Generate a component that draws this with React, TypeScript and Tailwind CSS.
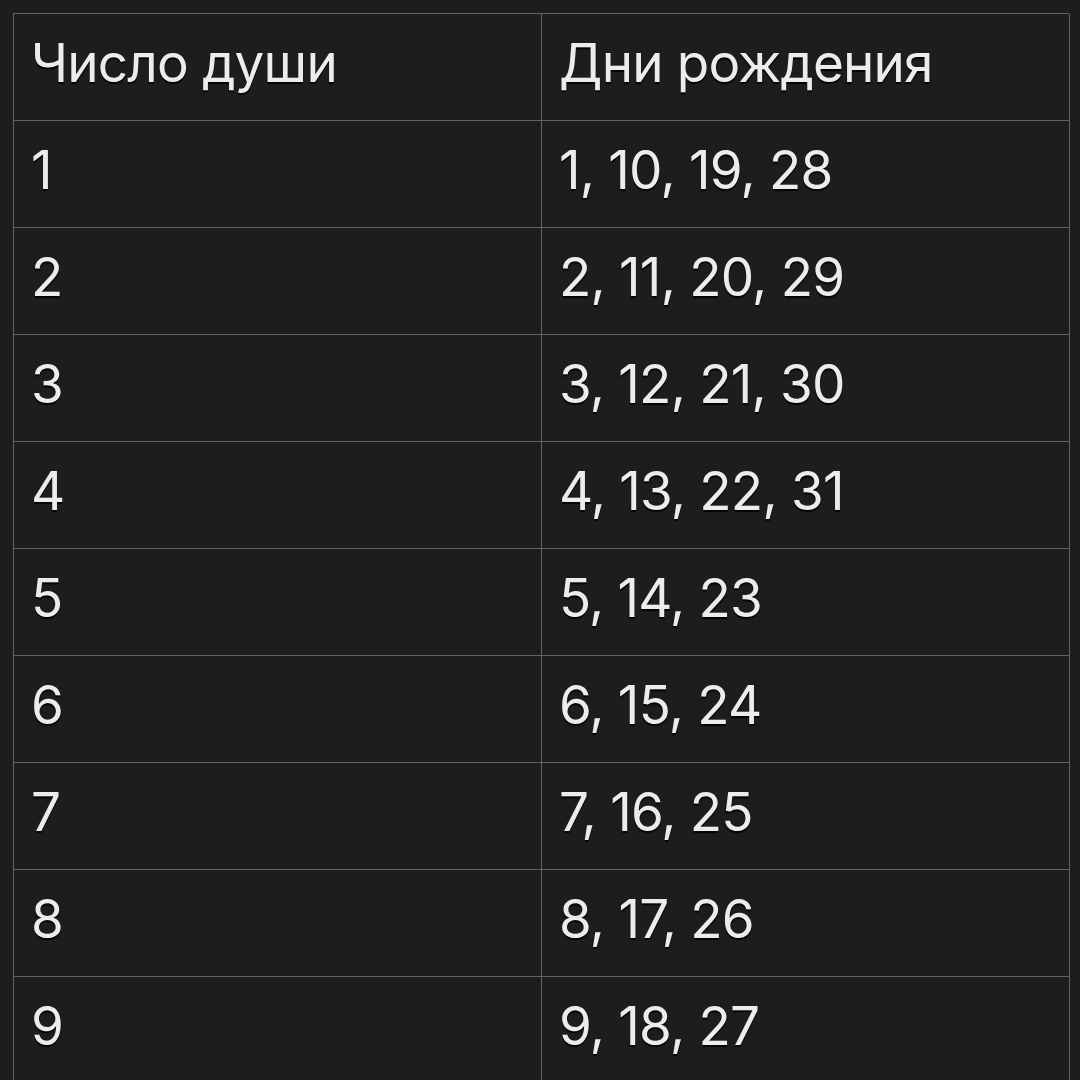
const rows = [
  ['1', '1, 10, 19, 28'],
  ['2', '2, 11, 20, 29'],
  ['3', '3, 12, 21, 30'],
  ['4', '4, 13, 22, 31'],
  ['5', '5, 14, 23'],
  ['6', '6, 15, 24'],
  ['7', '7, 16, 25'],
  ['8', '8, 17, 26'],
  ['9', '9, 18, 27'],
]

function Cell({ children }: { children: React.ReactNode }) {
  return (
    <div className="h-[107px] flex items-center pl-[17px] pb-[8px] border-r border-b border-[#646466] text-[53px] leading-none tracking-[-0.015em] text-[#ececec] [text-shadow:0_2px_1px_rgba(0,0,0,0.85)]">
      {children}
    </div>
  )
}

export default function App() {
  return (
    <div className="w-[1080px] h-[1080px] overflow-hidden bg-[#1d1d1f] pt-[13px] pl-[13px] font-['Inter','Noto_Sans',sans-serif]">
      <div className="w-[1056px] grid grid-cols-[528px_528px] border-t border-l border-[#646466]">
        {/* header */}
        <Cell>Число души</Cell>
        <Cell>Дни рождения</Cell>
        {rows.map(([soul, days]) => (
          <div key={soul} className="contents">
            <Cell>{soul}</Cell>
            <Cell>{days}</Cell>
          </div>
        ))}
      </div>
    </div>
  )
}
